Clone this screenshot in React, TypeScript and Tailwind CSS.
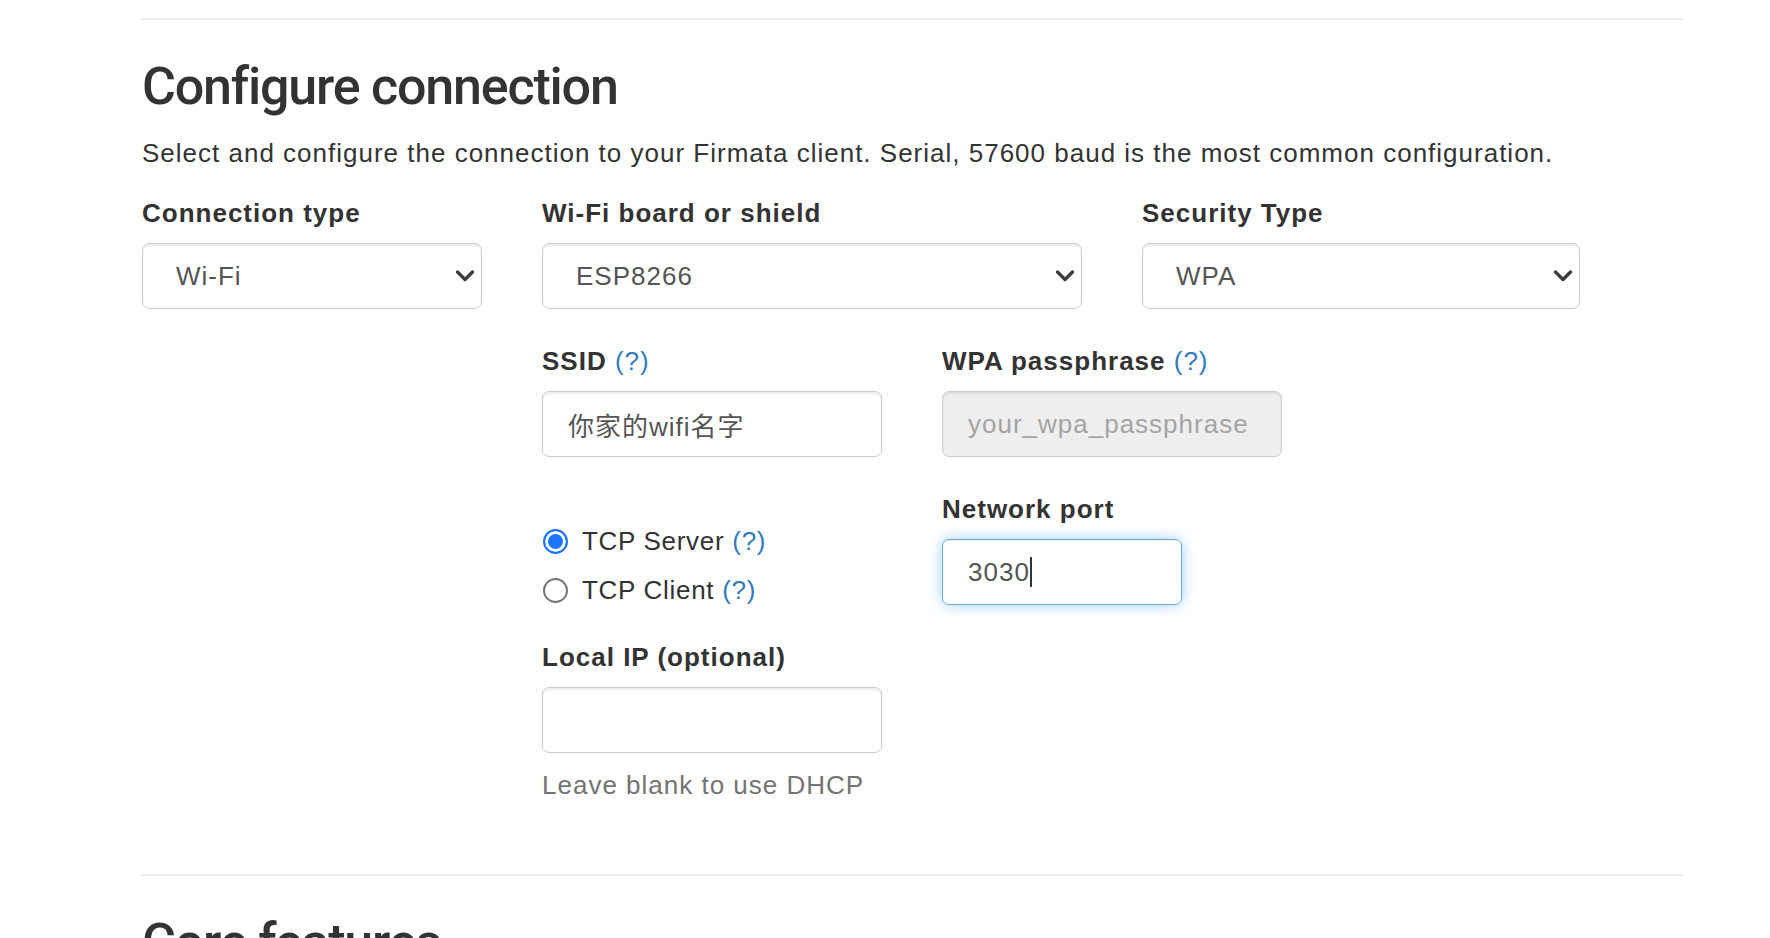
import React from 'react'

const font = "font-['Liberation_Sans','Noto_Sans_CJK_SC',Arial,sans-serif]"

function Help() {
    return <a href="#" className="font-normal text-[#337ab7] no-underline">(?)</a>
}

function Label({ children }: { children: React.ReactNode }) {
    return <label className="block mb-[12px] text-[26px] leading-[36px] tracking-[1px] font-bold text-[#333]">{children}</label>
}

const fieldCls =
    'block w-full h-[66px] rounded-[7px] border border-[#ccc] px-[25px] text-[26px] tracking-[1px] text-[#555] shadow-[inset_0_2px_2px_rgba(0,0,0,0.075)] outline-none'

function Chevron() {
    return (
        <svg width="20" height="13" viewBox="0 0 20 13" className="pointer-events-none absolute right-[7px] top-1/2 -translate-y-1/2">
            <path d="M2.5 2.5 L10 10 L17.5 2.5" fill="none" stroke="#3d3d3d" strokeWidth="3.4" strokeLinecap="round" strokeLinejoin="round" />
        </svg>
    )
}

function Select({ value, options }: { value: string; options: string[] }) {
    return (
        <div className="relative">
            <select defaultValue={value} className={`${fieldCls} bg-white appearance-none pl-[33px] pr-[50px]`}>
                {options.map((o) => (
                    <option key={o}>{o}</option>
                ))}
            </select>
            <Chevron />
        </div>
    )
}

function Radio({ checked, label }: { checked?: boolean; label: string }) {
    return (
        <label className="flex items-center gap-[14px] text-[26px] leading-[36px] tracking-[0.7px] text-[#333]">
            <input
                type="radio"
                name="tcp"
                defaultChecked={checked}
                className="appearance-none m-0 ml-[1px] w-[25px] h-[25px] rounded-full border-2 border-[#767676] bg-white checked:border-[#1a74ff] checked:bg-[#1a74ff] checked:shadow-[inset_0_0_0_3px_white]"
            />
            <span>
                {label} <Help />
            </span>
        </label>
    )
}

export default function App() {
    return (
        <div className={`bg-white ${font} text-[#333] overflow-hidden h-[938px]`}>
            <div className="ml-[142px] w-[1540px]">
                <hr className="mt-[18px] border-0 border-t-2 border-[#eee]" />

                <section>
                    <h2 className="mt-[38px] font-['Roboto',sans-serif] text-[52px] leading-[57px] font-medium tracking-[-1.2px] text-[#333]">
                        Configure connection
                    </h2>
                    <p className="mt-[20px] text-[26px] leading-[36px] tracking-[1px]">
                        Select and configure the connection to your Firmata client. Serial, 57600 baud is the most common configuration.
                    </p>

                    <div className="mt-[24px] flex gap-[60px]">
                        <div className="w-[340px]">
                            <Label>Connection type</Label>
                            <Select value="Wi-Fi" options={['Serial', 'Ethernet', 'Wi-Fi', 'Bluetooth']} />
                        </div>

                        <div className="w-[1040px]">
                            <div className="flex gap-[60px]">
                                <div className="w-[540px]">
                                    <Label>Wi-Fi board or shield</Label>
                                    <Select value="ESP8266" options={['ESP8266', 'Arduino WiFi Shield 101', 'Arduino MKR1000']} />
                                </div>
                                <div className="w-[438px]">
                                    <Label>Security Type</Label>
                                    <Select value="WPA" options={['WPA', 'WEP', 'None']} />
                                </div>
                            </div>

                            <div className="mt-[34px] flex gap-[60px]">
                                <div className="w-[340px]">
                                    <Label>
                                        SSID <Help />
                                    </Label>
                                    <input className={`${fieldCls} bg-white`} defaultValue="你家的wifi名字" />
                                </div>
                                <div className="w-[340px]">
                                    <Label>
                                        WPA passphrase <Help />
                                    </Label>
                                    <input
                                        disabled
                                        placeholder="your_wpa_passphrase"
                                        className={`${fieldCls} bg-[#eee] placeholder:text-[#a4a4a4] cursor-not-allowed`}
                                    />
                                </div>
                            </div>

                            <div className="mt-[34px] flex items-start gap-[60px]">
                                <div className="w-[340px] h-[114px] pt-[32px] flex flex-col gap-[13px]">
                                    <Radio checked label="TCP Server" />
                                    <Radio label="TCP Client" />
                                </div>
                                <div className="w-[240px]">
                                    <Label>Network port</Label>
                                    <div className="flex items-center h-[66px] rounded-[7px] border border-[#66afe9] bg-white px-[25px] text-[26px] tracking-[1px] text-[#555] shadow-[inset_0_1px_1px_rgba(0,0,0,0.075),0_0_14px_rgba(102,175,233,0.6)]">
                                        3030
                                        <span className="inline-block w-[2px] h-[30px] bg-[#333]" />
                                    </div>
                                </div>
                            </div>

                            <div className="mt-[34px] w-[340px]">
                                <Label>Local IP (optional)</Label>
                                <input className={`${fieldCls} bg-white`} />
                                <p className="mt-[14px] text-[26px] leading-[36px] tracking-[1px] text-[#737373]">Leave blank to use DHCP</p>
                            </div>
                        </div>
                    </div>
                </section>

                <hr className="mt-[71px] border-0 border-t-2 border-[#eee]" />
                <h2 className="mt-[38px] font-['Roboto',sans-serif] text-[52px] leading-[57px] font-medium tracking-[-1.2px] text-[#333]">
                    Core features
                </h2>
            </div>
        </div>
    )
}
